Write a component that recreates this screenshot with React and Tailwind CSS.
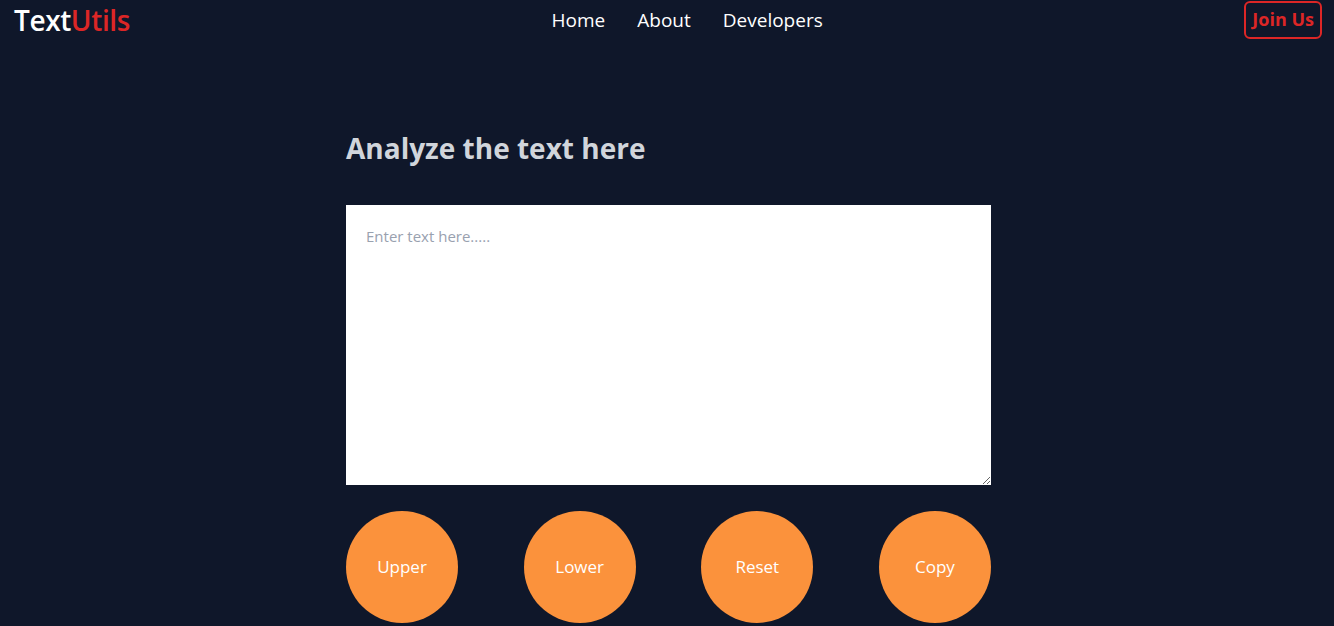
export default function App() {
  const font = { fontFamily: '"Open Sans", "Noto Sans", sans-serif' };
  return (
    <div className="min-h-[626px] bg-[#0f172a] text-white" style={font}>
      <nav className="flex items-center justify-between pl-[14px] pr-[12px] h-[40px]">
        <div className="text-[28px] font-semibold tracking-[-0.4px] leading-[40px]">
          <span className="text-white">Text</span>
          <span className="text-[#dc2626]">Utils</span>
        </div>
        <ul className="flex items-center gap-[32px] text-[19px]">
          <li>Home</li>
          <li>About</li>
          <li>Developers</li>
        </ul>
        <button className="h-[38px] px-[6px] border-2 border-[#dc2626] rounded-md text-[#dc2626] text-[18px] font-bold mt-[-1px]">
          Join Us
        </button>
      </nav>
      <main className="w-[648px] mx-auto pl-[3px] pt-[90px]">
        <h1 className="text-[28px] font-bold text-[#d1d5db] leading-[36px]">Analyze the text here</h1>
        <textarea
          className="mt-[39px] block w-full h-[280px] bg-white p-5 text-[15px] text-gray-800 placeholder:text-gray-400 outline-none"
          placeholder="Enter text here....."
        />
        <div className="flex justify-between mt-[26px]">
          {["Upper", "Lower", "Reset", "Copy"].map((t) => (
            <button key={t} className="w-[112px] h-[112px] rounded-full bg-[#fb923c] text-white text-[17px]">
              {t}
            </button>
          ))}
        </div>
      </main>
    </div>
  );
}
